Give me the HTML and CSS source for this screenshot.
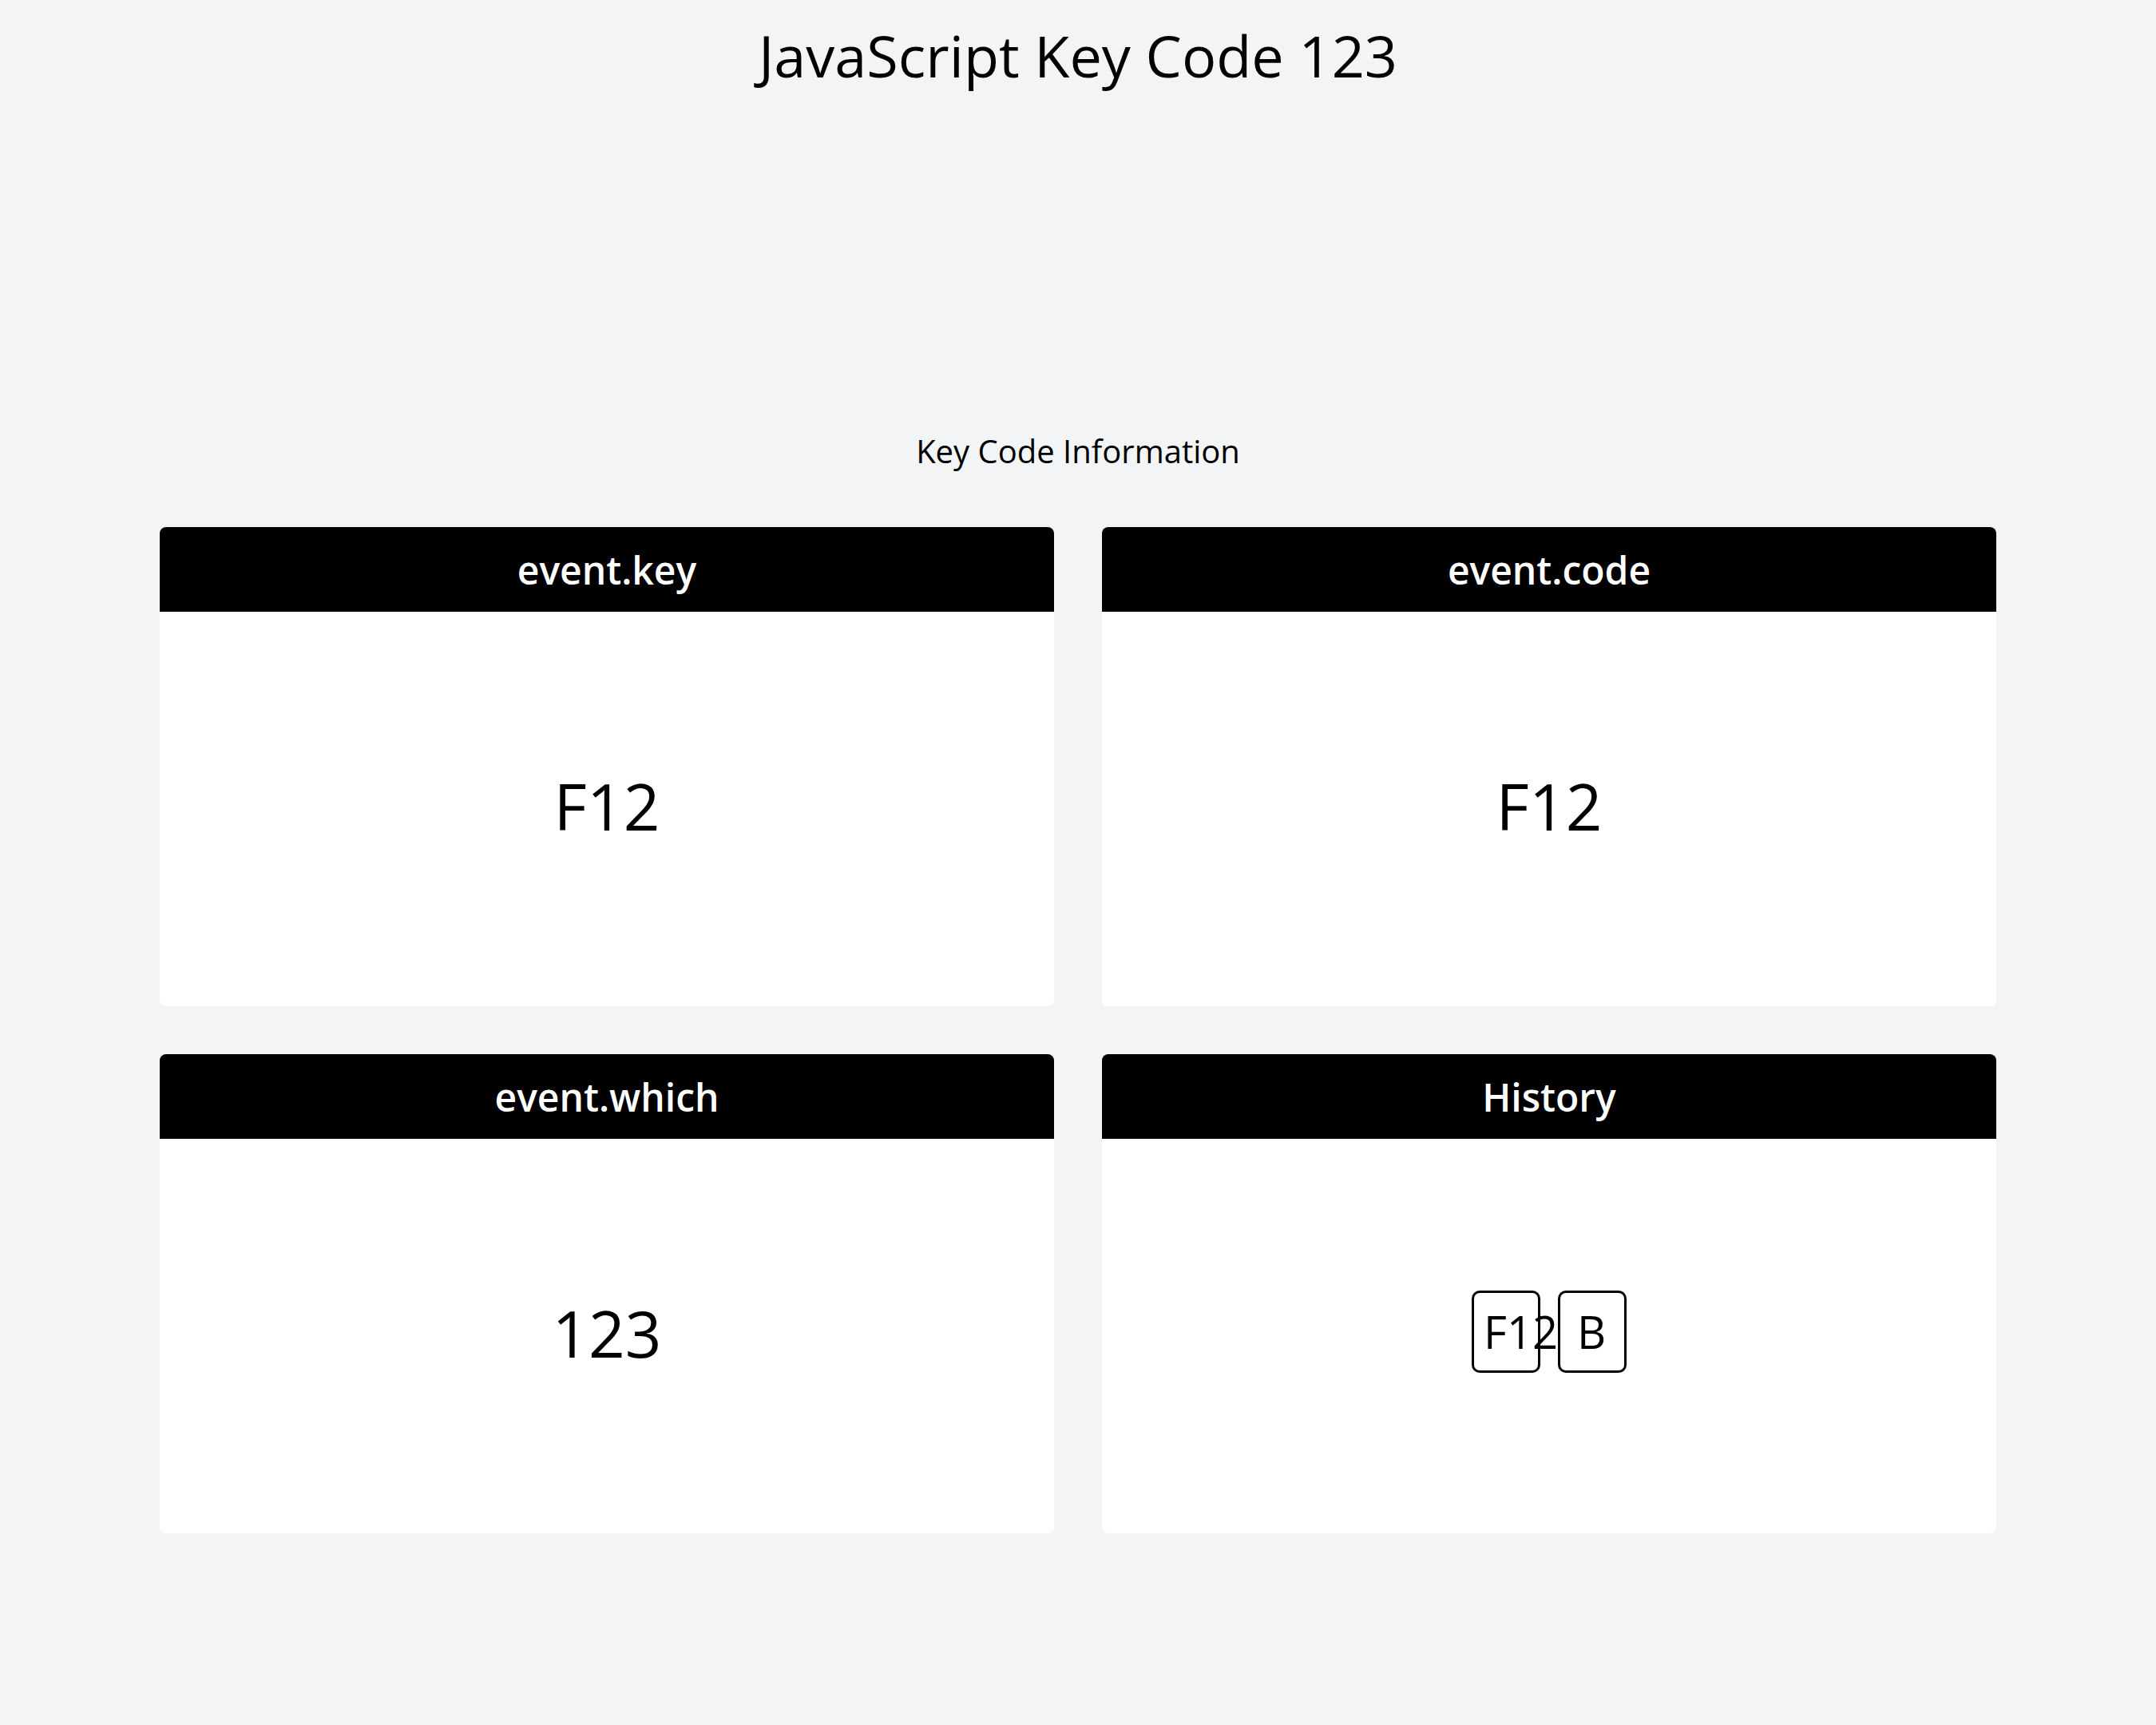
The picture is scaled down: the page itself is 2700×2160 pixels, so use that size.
FILE: index.html
```html
<!DOCTYPE html>
<html lang="en">
<head>
<meta charset="utf-8">
<title>JavaScript Key Code 123</title>
<link rel="stylesheet" href="styles.css">
</head>
<body>
  <h1 class="page-title">JavaScript Key Code 123</h1>
  <main class="info">
    <h2 class="info-title">Key Code Information</h2>
    <div class="grid">
      <section class="card">
        <div class="card-head">event.key</div>
        <div class="card-body">F12</div>
      </section>
      <section class="card">
        <div class="card-head">event.code</div>
        <div class="card-body">F12</div>
      </section>
      <section class="card">
        <div class="card-head">event.which</div>
        <div class="card-body">123</div>
      </section>
      <section class="card">
        <div class="card-head">History</div>
        <div class="card-body history">
          <span class="key">F12</span>
          <span class="key">B</span>
        </div>
      </section>
    </div>
  </main>
</body>
</html>
```

FILE: styles.css
```css
html, body {
  margin: 0;
  padding: 0;
}

body {
  background: #f3f4f6;
  color: #000;
  font-family: "Open Sans", "Noto Sans", sans-serif;
  min-height: 2160px;
}

.page-title {
  margin: 0;
  padding-top: 20px;
  font-size: 72px;
  line-height: 98px;
  font-weight: 400;
  text-align: center;
}

.info {
  margin-top: 420px;
}

.info-title {
  margin: 0 0 68px;
  font-size: 40px;
  line-height: 54px;
  font-weight: 400;
  text-align: center;
}

.grid {
  display: grid;
  grid-template-columns: 1120px 1120px;
  gap: 60px;
  justify-content: center;
}

.card {
  height: 600px;
  background: #fff;
  border-radius: 8px;
  overflow: hidden;
  display: flex;
  flex-direction: column;
}

.card-head {
  background: #000;
  color: #fff;
  font-size: 48px;
  font-weight: 600;
  line-height: 65px;
  padding: 21px 20px 20px;
  text-align: center;
}

.card-body {
  flex: 1;
  display: flex;
  align-items: center;
  justify-content: center;
  font-size: 80px;
  padding-bottom: 10px;
}

.history {
  padding-bottom: 12px;
}

.key {
  box-sizing: border-box;
  width: 86px;
  height: 103px;
  margin: 0 11px;
  padding: 0 14px 0 12px;
  border: 3px solid #000;
  border-radius: 10px;
  font-size: 56px;
  line-height: 97px;
  text-align: center;
  white-space: nowrap;
}
```
